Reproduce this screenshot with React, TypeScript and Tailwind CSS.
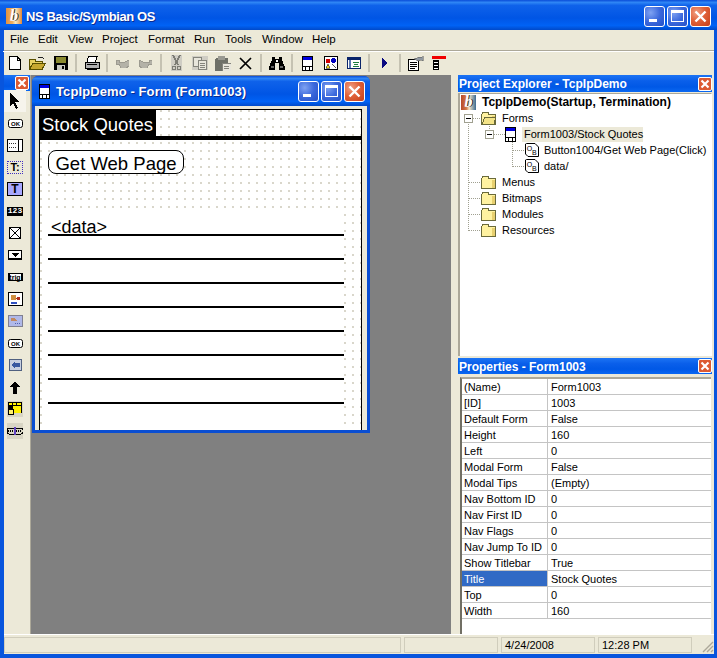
import type { ReactNode } from "react";

const TITLE_BG =
  "bg-[linear-gradient(180deg,#0A4CD8_0%,#2F86F5_8%,#0F62EA_18%,#0055E5_60%,#0062F5_85%,#0049C9_100%)]";
const PANEL_BG = "bg-[linear-gradient(180deg,#1C74F4_0%,#0A5FEA_35%,#0058E6_70%,#0A68F2_100%)]";

function Px({ w = 16, h = 16, children }: { w?: number; h?: number; children: ReactNode }) {
  return (
    <svg width={w} height={h} viewBox={`0 0 ${w} ${h}`} shapeRendering="crispEdges" className="block shrink-0">
      {children}
    </svg>
  );
}

function CaptionButton({ kind }: { kind: "min" | "max" | "close" }) {
  const bg =
    kind === "close"
      ? "bg-[radial-gradient(circle_at_30%_30%,#F0A085_0%,#E0623A_45%,#C63E18_100%)]"
      : "bg-[radial-gradient(circle_at_30%_30%,#7FA2F2_0%,#3B68DC_50%,#2350C8_100%)]";
  return (
    <div className={`w-[21px] h-[21px] rounded-[3px] border border-white flex items-center justify-center ${bg}`}>
      <svg width="19" height="19" viewBox="0 0 19 19">
        {kind === "min" && <rect x="4" y="12" width="8" height="3" fill="#fff" />}
        {kind === "max" && (
          <>
            <rect x="3.5" y="3.5" width="12" height="11" fill="none" stroke="#fff" />
            <rect x="3" y="3" width="13" height="3" fill="#fff" />
          </>
        )}
        {kind === "close" && (
          <path d="M4.5 4.5 14.5 14.5M14.5 4.5 4.5 14.5" stroke="#fff" strokeWidth="2.4" />
        )}
      </svg>
    </div>
  );
}

function SmallClose() {
  return (
    <div className="w-[14px] h-[14px] rounded-[2px] border border-white bg-[#DC5A32] flex items-center justify-center">
      <svg width="10" height="10" viewBox="0 0 10 10">
        <path d="M1.5 1.5 8.5 8.5M8.5 1.5 1.5 8.5" stroke="#fff" strokeWidth="2.2" />
      </svg>
    </div>
  );
}

function Logo({ size, root }: { size: number; root?: boolean }) {
  const tile = root
    ? "bg-[linear-gradient(90deg,#B8482A_0%,#D07848_35%,#F4E6C8_55%,#3C6A90_100%)]"
    : "bg-[linear-gradient(90deg,#E09040_0%,#F0B060_40%,#F8E8C0_60%,#E08838_100%)]";
  return (
    <div className={`flex items-center justify-center ${tile}`} style={{ width: size, height: size }}>
      <span className="font-['Liberation_Serif',serif] italic font-bold text-white text-[16px] leading-[16px] [text-shadow:1px_0_0_#222]">
        b
      </span>
    </div>
  );
}

function FormIcon() {
  return (
    <Px w={11} h={15}>
      <rect x="0" y="0" width="11" height="15" fill="#000" />
      <rect x="1" y="1" width="9" height="3" fill="#0000E0" />
      <rect x="1" y="4" width="9" height="6" fill="#fff" />
      <rect x="1" y="11" width="2" height="3" fill="#fff" />
      <rect x="4" y="11" width="3" height="3" fill="#fff" />
      <rect x="8" y="11" width="2" height="3" fill="#fff" />
    </Px>
  );
}

const toolbarIcons: Record<string, ReactNode> = {
  new: (
    <Px w={12} h={14}>
      <path d="M.5.5H8L11.5 4V13.5H.5Z" fill="#fff" stroke="#000" />
      <path d="M8 .5V4H11.5" fill="none" stroke="#000" />
    </Px>
  ),
  open: (
    <Px w={17} h={14}>
      <path d="M.5 3.5H6V5H13V7H4L.5 13Z" fill="#E8D060" stroke="#5A5000" />
      <path d="M.5 13.5 4 7H16.5L13 13.5Z" fill="#C8A830" stroke="#5A5000" />
      <path d="M9 1 13 1 15 3" fill="none" stroke="#222" />
    </Px>
  ),
  save: (
    <Px w={14} h={14}>
      <rect x="0" y="0" width="14" height="14" fill="#000" />
      <rect x="2" y="1" width="10" height="6" fill="#8A8A30" />
      <rect x="3" y="9" width="8" height="5" fill="#C8C8C0" />
      <rect x="8" y="10" width="2" height="3" fill="#000" />
    </Px>
  ),
  print: (
    <Px w={16} h={14}>
      <path d="M4.5.5H13L11.5 6H3Z" fill="#fff" stroke="#000" />
      <rect x="1" y="6" width="14" height="6" fill="#B0B0B0" stroke="#000" />
      <rect x="3" y="12" width="10" height="2" fill="#000" />
      <rect x="3" y="8" width="10" height="1" fill="#000" />
    </Px>
  ),
  undo: (
    <Px w={13} h={9}>
      <path d="M0 1H3V3H9L13 1V7L10 9H5L3 5H0Z" fill="#B4B2A8" stroke="#9C9A90" />
    </Px>
  ),
  redo: (
    <Px w={13} h={9}>
      <path d="M13 1H10V3H4L0 1V7L3 9H8L10 5H13Z" fill="#B4B2A8" stroke="#9C9A90" />
    </Px>
  ),
  cut: (
    <Px w={11} h={16}>
      <rect x="0" y="0" width="11" height="16" fill="#CFCDC4" />
      <path d="M2 0 7 10M9 0 4 10" stroke="#7C7C74" strokeWidth="1.4" />
      <circle cx="3" cy="13" r="2" fill="none" stroke="#7C7C74" />
      <circle cx="8" cy="13" r="2" fill="none" stroke="#7C7C74" />
    </Px>
  ),
  copy: (
    <Px w={16} h={14}>
      <rect x="0" y="0" width="16" height="14" fill="#CFCDC4" />
      <rect x="1" y="1" width="8" height="9" fill="#E8E6DC" stroke="#84847C" />
      <rect x="6.5" y="4.5" width="8" height="9" fill="#E8E6DC" stroke="#84847C" />
      <path d="M8 7H13M8 9H13M8 11H13" stroke="#84847C" />
    </Px>
  ),
  paste: (
    <Px w={16} h={15}>
      <rect x="0" y="2" width="13" height="13" rx="2" fill="#6E7068" />
      <rect x="3" y="0" width="7" height="4" fill="#9A9A92" />
      <rect x="7" y="7" width="9" height="8" fill="#E8E6DC" stroke="#84847C" />
      <path d="M9 10H14M9 12H14" stroke="#84847C" />
    </Px>
  ),
  del: (
    <svg width="13" height="13" viewBox="0 0 13 13" className="block">
      <path d="M1 1 12 12M12 1 1 12" stroke="#000" strokeWidth="1.7" />
    </svg>
  ),
  find: (
    <Px w={16} h={13}>
      <path d="M3 0H6V2H10V0H13V3L16 10V13H10V6H6V13H0V10L3 3Z" fill="#000" />
      <rect x="2" y="9" width="3" height="2" fill="#666" />
      <rect x="11" y="9" width="3" height="2" fill="#666" />
      <rect x="7" y="3" width="2" height="2" fill="#fff" />
    </Px>
  ),
  form: <FormIcon />,
  toolbox: (
    <Px w={14} h={14}>
      <rect x=".5" y=".5" width="13" height="13" fill="#fff" stroke="#000" />
      <rect x="2" y="3" width="4" height="4" fill="#D00000" />
      <circle cx="9.5" cy="4.5" r="2.5" fill="#0000C0" />
      <path d="M2 12 4 8 6 12Z" fill="#E8D020" stroke="#000" strokeWidth=".5" />
      <path d="M8 8 12 12" stroke="#555" />
    </Px>
  ),
  code: (
    <Px w={14} h={12}>
      <rect x=".5" y=".5" width="13" height="11" fill="#fff" stroke="#0A246A" />
      <rect x="0" y="0" width="14" height="3" fill="#0A246A" />
      <rect x="2" y="3" width="2" height="8" fill="#5A78B0" />
      <path d="M6 5H12M7 7H11M6 9H12" stroke="#208040" />
    </Px>
  ),
  play: (
    <Px w={6} h={10}>
      <path d="M0 0 6 5 0 10Z" fill="#0A0A80" />
    </Px>
  ),
  props: (
    <Px w={16} h={15}>
      <path d="M.5 3.5H10.5V14.5H.5Z" fill="#fff" stroke="#000" />
      <path d="M2 6H9M2 8H9M2 10H9M2 12H7" stroke="#000" />
      <path d="M6 3 11 1 14 1 15 0V5L13 4 10 5Z" fill="#9098A0" stroke="#555" strokeWidth=".5" />
    </Px>
  ),
  stack: (
    <Px w={14} h={14}>
      <rect x="0" y="0" width="14" height="3" fill="#F00000" />
      <rect x="1" y="4" width="6" height="10" fill="#000" />
      <path d="M2 6H6M2 9H6M2 12H6" stroke="#fff" />
    </Px>
  ),
};

const toolbarLayout: (string | null)[] = [
  "new", "open", "save", null, "print", null, "undo", "redo", null, "cut", "copy", "paste", "del", null,
  "find", null, "form", "toolbox", "code", null, "play", null, "props", "stack",
];

const paletteIcons: ReactNode[] = [
  <Px w={11} h={16}>
    <path d="M0 0 0 13 3 10 6 16 8 15 5 9 10 9Z" fill="#000" />
  </Px>,
  <svg width="15" height="9" viewBox="0 0 15 9" className="block">
    <rect x=".5" y=".5" width="14" height="8" rx="2" fill="#fff" stroke="#000" />
    <text x="7.5" y="6.6" textAnchor="middle" fontSize="6" fontWeight="700" fontFamily="Liberation Sans, sans-serif">OK</text>
  </svg>,
  <Px w={16} h={13}>
    <rect x=".5" y=".5" width="15" height="12" fill="#fff" stroke="#000" />
    <rect x="11" y="1" width="1" height="11" fill="#000" />
    <path d="M2 4H10M2 8H10" stroke="#333" strokeDasharray="1 1" />
  </Px>,
  <div className="w-[16px] h-[13px] border border-dotted border-[#4030C0] flex items-center justify-center font-['Liberation_Sans',sans-serif] font-bold text-[11px] leading-none text-black">
    T:
  </div>,
  <div className="w-[16px] h-[14px] border border-black bg-[#A8A8FF] flex items-center justify-center font-['Liberation_Sans',sans-serif] font-bold text-[12px] leading-none text-black">
    T
  </div>,
  <div className="w-[16px] h-[9px] bg-black flex items-center justify-center font-['Liberation_Mono',monospace] font-bold text-[8px] leading-none text-white">
    123
  </div>,
  <Px w={12} h={12}>
    <rect x=".5" y=".5" width="11" height="11" fill="#fff" stroke="#000" />
    <path d="M1 1 11 11M11 1 1 11" stroke="#000" />
  </Px>,
  <Px w={14} h={10}>
    <rect x=".5" y=".5" width="13" height="9" fill="#fff" stroke="#000" />
    <rect x="1" y="8" width="12" height="1" fill="#000" />
    <path d="M3 3H11L7 7Z" fill="#000" />
  </Px>,
  <div className="w-[15px] h-[8px] bg-white border-x-2 border-y border-black flex items-center justify-center font-['Liberation_Sans',sans-serif] font-bold text-[7px] leading-none text-black">
    trig
  </div>,
  <Px w={15} h={14}>
    <rect x=".5" y=".5" width="14" height="13" fill="#fff" stroke="#000" />
    <rect x="3" y="3" width="5" height="5" fill="#D09040" />
    <circle cx="10.5" cy="6.5" r="2" fill="#B03020" />
    <path d="M3 11H9" stroke="#3050C0" strokeWidth="2" />
  </Px>,
  <Px w={15} h={12}>
    <rect x="0" y="0" width="15" height="12" fill="#808090" />
    <rect x="1" y="1" width="13" height="10" fill="#B0B8E8" />
    <path d="M3 3H7L9 6H3Z" fill="#C08860" />
    <path d="M7 8H13" stroke="#5060B0" strokeDasharray="1 1" />
  </Px>,
  <svg width="15" height="9" viewBox="0 0 15 9" className="block">
    <rect x=".5" y=".5" width="14" height="8" rx="2" fill="#fff" stroke="#000" />
    <text x="7.5" y="6.6" textAnchor="middle" fontSize="6" fontWeight="700" fontFamily="Liberation Sans, sans-serif">OK</text>
  </svg>,
  <Px w={13} h={12}>
    <rect x=".5" y=".5" width="12" height="11" fill="#C8D0E0" stroke="#506080" />
    <path d="M2 6 6 2V4H11V8H6V10Z" fill="#3858A0" />
  </Px>,
  <Px w={10} h={13}>
    <path d="M5 0 10 6H7V13H3V6H0Z" fill="#000" />
  </Px>,
  <div className="w-[16px] h-[16px] bg-[#D8D5C4] flex items-center justify-center">
    <Px w={14} h={15}>
      <rect x="0" y="0" width="14" height="11" fill="#000" />
      <rect x="1" y="1" width="3" height="2" fill="#FFF000" />
      <rect x="5" y="1" width="3" height="2" fill="#FFF000" />
      <rect x="9" y="1" width="4" height="2" fill="#FFF000" />
      <rect x="5" y="4" width="8" height="7" fill="#FFF000" />
      <circle cx="3" cy="10" r="3" fill="#FFF070" stroke="#000" />
    </Px>
  </div>,
  <div className="w-[16px] h-[16px] bg-[#D8D5C4] flex items-center justify-center">
    <Px w={16} h={8}>
      <rect x="0" y="1" width="16" height="6" rx="2" fill="#D8D5C4" stroke="#000" />
      <path d="M1 4H15" stroke="#000" strokeDasharray="1 1" strokeWidth="2" />
      <rect x="7" y="0" width="2" height="8" fill="#6040C0" />
    </Px>
  </div>,
];

const menus = [
  { label: "File", width: "w-[28px]" },
  { label: "Edit", width: "w-[30px]" },
  { label: "View", width: "w-[34px]" },
  { label: "Project", width: "w-[46px]" },
  { label: "Format", width: "w-[46px]" },
  { label: "Run", width: "w-[31px]" },
  { label: "Tools", width: "w-[37px]" },
  { label: "Window", width: "w-[50px]" },
  { label: "Help", width: "w-[40px]" },
];

const properties = [
  ["(Name)", "Form1003"],
  ["[ID]", "1003"],
  ["Default Form", "False"],
  ["Height", "160"],
  ["Left", "0"],
  ["Modal Form", "False"],
  ["Modal Tips", "(Empty)"],
  ["Nav Bottom ID", "0"],
  ["Nav First ID", "0"],
  ["Nav Flags", "0"],
  ["Nav Jump To ID", "0"],
  ["Show Titlebar", "True"],
  ["Title", "Stock Quotes"],
  ["Top", "0"],
  ["Width", "160"],
];

function Folder({ open }: { open?: boolean }) {
  return (
    <Px w={16} h={13}>
      <path d="M.5 12.5V2.5L2 .5H7L8 2.5H14.5V12.5Z" fill="#FFF2A0" stroke="#6A6A3A" />
      <rect x="11" y="4" width="3" height="8" fill="#E8D070" />
      {open && <path d="M1 12 4 5H15L13 12Z" fill="#F4E488" stroke="#6A6A3A" />}
    </Px>
  );
}

function ObjIcon() {
  return (
    <svg width="14" height="14" viewBox="0 0 14 14" className="block">
      <path d="M1.5.5H10L13.5 4V13.5H3L.5 11V1Z" fill="#fff" stroke="#000" />
      <text x="1.8" y="7.5" fontSize="7" fontFamily="Liberation Sans, sans-serif" fill="#000">O</text>
      <text x="7" y="12" fontSize="7" fontFamily="Liberation Sans, sans-serif" fill="#000">B</text>
    </svg>
  );
}

function TreeLines() {
  const dot = { stroke: "#A0A090", strokeDasharray: "1 1" };
  return (
    <svg width="252" height="160" className="absolute left-0 top-0" shapeRendering="crispEdges">
      <path d="M8.5 28V136.5M8.5 24.5H21M8.5 88.5H21M8.5 104.5H21M8.5 120.5H21M8.5 136.5H21" fill="none" {...dot} />
      <path d="M29.5 32V36M34 40.5H45M52.5 48V72.5M52.5 56.5H65M52.5 72.5H65" fill="none" {...dot} />
      <rect x="4.5" y="20.5" width="8" height="8" fill="#fff" stroke="#A0A090" />
      <path d="M6 24.5H11" stroke="#000" />
      <rect x="25.5" y="36.5" width="8" height="8" fill="#fff" stroke="#A0A090" />
      <path d="M27 40.5H32" stroke="#000" />
    </svg>
  );
}

function TreeRow({ indent, icon, children }: { indent: string; icon: ReactNode; children: ReactNode }) {
  return (
    <div className={`relative h-4 flex items-center whitespace-nowrap ${indent}`}>
      {icon}
      {children}
    </div>
  );
}

export default function App() {
  return (
    <div className="w-[717px] h-[658px] overflow-hidden bg-[#0855DD] flex flex-col font-['Liberation_Sans',sans-serif] text-[11px] text-black">
      {/* main title bar */}
      <div className={`h-[30px] shrink-0 flex items-center pl-[6px] pr-[6px] pt-[2px] ${TITLE_BG}`}>
        <Logo size={16} />
        <span className="ml-1 flex-1 pt-px text-white font-bold text-[13px] tracking-[-0.4px] [text-shadow:1px_1px_0_#0A2A90]">NS Basic/Symbian OS</span>
        <div className="flex gap-[2px]">
          <CaptionButton kind="min" />
          <CaptionButton kind="max" />
          <CaptionButton kind="close" />
        </div>
      </div>

      <div className="flex-1 mx-0 ml-1 mr-[3px] mb-1 bg-[#ECE9D8] flex flex-col min-h-0">
        {/* menu */}
        <div className="h-[21px] shrink-0 flex items-center pl-[6px] border-b border-[#ACA899] text-[11.5px]">
          {menus.map((m) => (
            <span key={m.label} className={m.width}>{m.label}</span>
          ))}
        </div>

        {/* toolbar */}
        <div className="h-[24px] shrink-0 flex items-start -ml-px border-t border-white">
          {toolbarLayout.map((name, i) =>
            name ? (
              <div key={i} className="w-[23px] h-[22px] flex items-center justify-center">{toolbarIcons[name]}</div>
            ) : (
              <div key={i} className="w-[8px] h-[22px] flex items-center justify-center">
                <div className="w-[2px] h-[18px] bg-[#C5C2B2]" />
              </div>
            ),
          )}
        </div>

        {/* work area */}
        <div className="h-[559px] shrink-0 flex">
          {/* control palette */}
          <div className="w-[26px] shrink-0 flex flex-col">
            <div className={`h-[16px] flex items-center justify-end pr-px ${PANEL_BG}`}>
              <SmallClose />
            </div>
            {paletteIcons.map((icon, i) => (
              <div
                key={i}
                className={
                  i === 0
                    ? "w-[22px] h-[22px] -mt-px flex items-center justify-center bg-[#F6F4EC]"
                    : "w-[22px] h-[22px] flex items-center justify-center"
                }
              >
                {icon}
              </div>
            ))}
          </div>

          {/* MDI client */}
          <div className="relative w-[421px] shrink-0 bg-[#808080] border-l border-[#ACA899]">
            <div className="absolute left-[1px] top-[1px] w-[338px] h-[357px] flex flex-col rounded-t-[6px] bg-[#0A4ED2] px-[3px] pb-[3px]">
              <div className={`-mx-[3px] h-[30px] shrink-0 rounded-t-[6px] flex items-center pl-[7px] pr-[5px] pt-px ${TITLE_BG}`}>
                <FormIcon />
                <span className="ml-[6px] flex-1 pt-px text-white font-bold text-[13px] tracking-[0.1px] [text-shadow:1px_1px_0_#0A2A90]">TcpIpDemo - Form (Form1003)</span>
                <div className="flex gap-[2px]">
                  <CaptionButton kind="min" />
                  <CaptionButton kind="max" />
                  <CaptionButton kind="close" />
                </div>
              </div>
              <div className="flex-1 bg-[#ECE9D8] pt-[3px] pl-[4px] pr-[5px] flex flex-col min-h-0">
                {/* design canvas */}
                <div className="flex-1 border-x border-t border-black bg-white bg-[radial-gradient(circle_at_1px_1px,#C4C0AE_0.6px,transparent_0.9px)] bg-[size:8px_8px] flex flex-col font-['Liberation_Sans',sans-serif]">
                  <div className="w-[116px] h-[26px] bg-black text-white text-[18.5px] leading-[30px] pl-[2px] whitespace-nowrap">Stock Quotes</div>
                  <div className="h-[4px] bg-black shrink-0" />
                  <div className="mt-[10px] ml-[8px] w-[136px] h-[24px] bg-white border border-black rounded-[8px] text-[18.5px] leading-[25px] text-center whitespace-nowrap">Get Web Page</div>
                  <div className="mt-[38px] ml-[8px] w-[296px]">
                    <div className="h-[24px] border-b-2 border-black text-[18px] leading-[31px] pl-[3px] bg-white">&lt;data&gt;</div>
                    {[1, 2, 3, 4, 5, 6, 7].map((n) => (
                      <div key={n} className="h-[24px] border-b-2 border-black bg-white" />
                    ))}
                    <div className="h-[26px] bg-white" />
                  </div>
                </div>
              </div>
            </div>
          </div>

          {/* right docks */}
          <div className="ml-[7px] w-[254px] shrink-0 flex flex-col">
            <div className={`h-[17px] shrink-0 flex items-center ${PANEL_BG}`}>
              <span className="flex-1 text-white font-bold text-[12px] pl-[1px]">Project Explorer - TcpIpDemo</span>
              <SmallClose />
            </div>
            <div className="relative h-[263px] shrink-0 mt-px bg-white border-t border-l-2 border-[#ACA899] border-r border-r-white">
              <TreeLines />
              <div className="relative h-4 flex items-center pl-[1px]">
                <Logo size={15} root />
                <span className="ml-[6px] font-bold text-[12px] whitespace-nowrap">TcpIpDemo(Startup, Termination)</span>
              </div>
              <TreeRow indent="pl-[21px]" icon={<Folder open />}><span className="ml-[5px]">Forms</span></TreeRow>
              <TreeRow indent="pl-[45px]" icon={<FormIcon />}>
                <span className="ml-[6px] px-[2px] bg-[#ECE9D8] w-[121px] leading-[15px]">Form1003/Stock Quotes</span>
              </TreeRow>
              <TreeRow indent="pl-[65px]" icon={<ObjIcon />}><span className="ml-[5px]">Button1004/Get Web Page(Click)</span></TreeRow>
              <TreeRow indent="pl-[65px]" icon={<ObjIcon />}><span className="ml-[5px]">data/</span></TreeRow>
              {["Menus", "Bitmaps", "Modules", "Resources"].map((label) => (
                <TreeRow key={label} indent="pl-[21px]" icon={<Folder />}><span className="ml-[5px]">{label}</span></TreeRow>
              ))}
            </div>

            <div className={`h-[16px] shrink-0 mt-[2px] flex items-center ${PANEL_BG}`}>
              <span className="flex-1 text-white font-bold text-[12px] pl-[1px] pt-px">Properties - Form1003</span>
              <SmallClose />
            </div>
            <div className="flex-1 min-h-0 mt-[3px] ml-[2px] mr-px bg-white border-t-2 border-l-2 border-t-[#ACA899] border-l-[#716F64]">
              {properties.map(([name, value]) => (
                <div key={name} className="h-4 flex border-b border-[#C4C4C4] leading-[16px]">
                  <div className={name === "Title" ? "w-[86px] shrink-0 pl-[2px] bg-[#316AC5] text-white border-r border-[#C4C4C4]" : "w-[86px] shrink-0 pl-[2px] border-r border-[#C4C4C4]"}>
                    {name}
                  </div>
                  <div className="pl-[3px]">{value}</div>
                </div>
              ))}
            </div>
          </div>
        </div>

        {/* status bar */}
        <div className="flex-1 min-h-0 flex items-end pb-[1px] gap-[3px] pl-0 border-t border-white">
          <div className="w-[397px] h-[16px] border border-[#D0CDBC]" />
          <div className="w-[94px] h-[16px] border border-[#D0CDBC]" />
          <div className="w-[94px] h-[16px] border border-[#D0CDBC] pl-[3px] leading-[14px]">4/24/2008</div>
          <div className="w-[94px] h-[16px] border border-[#D0CDBC] pl-[3px] leading-[14px]">12:28 PM</div>
          <svg width="14" height="14" viewBox="0 0 14 14" className="ml-auto block">
            <path d="M13 3 3 13M13 7 7 13M13 11 11 13" stroke="#ACA899" strokeWidth="1.4" />
          </svg>
        </div>
      </div>
    </div>
  );
}
